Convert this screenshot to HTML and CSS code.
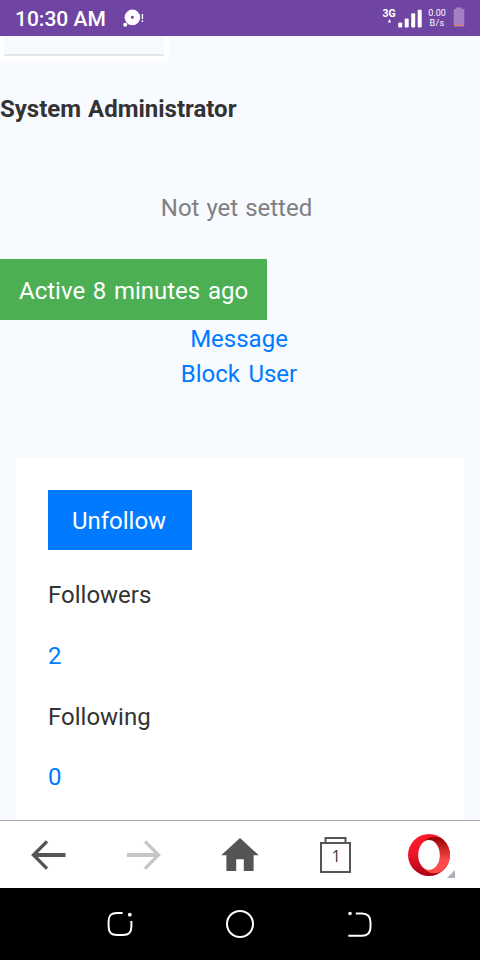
FILE: index.html
```html
<!DOCTYPE html>
<html lang="en">
<head>
<meta charset="utf-8">
<meta name="viewport" content="width=device-width">
<title>System Administrator</title>
<link rel="stylesheet" href="styles.css">
</head>
<body>
<header class="status">
  <time class="clock">10:30 AM</time>
  <svg class="notice" width="24" height="20" viewBox="0 0 24 20"><path fill="#fff" fill-rule="evenodd" d="M10.4 .6a7.8 7.8 0 1 0 0 15.6 7.8 7.8 0 0 0 0-15.6Zm0 6.2a1.5 1.5 0 1 1 0 3 1.5 1.5 0 0 1 0-3Z"/><circle cx="3.2" cy="15.8" r="2" fill="#fff"/><path d="M20.4 5v5M20.4 11.3V13" stroke="#fff" stroke-width="1.4"/></svg>
  <div class="network"><span>3G</span><svg width="5" height="4" viewBox="0 0 5 4"><path d="M.8 3.5 2.5 0l1.7 3.5Z" fill="#fff"/></svg></div>
  <svg class="signal" width="25" height="20" viewBox="0 0 25 20" fill="#fff"><rect x=".2" y="14.6" width="4" height="5" rx="1"/><rect x="6.7" y="10.5" width="4" height="9.1" rx="1"/><rect x="13.2" y="5.2" width="4" height="14.4" rx="1"/><rect x="19.7" y="1.8" width="4" height="17.8" rx="1"/></svg>
  <div class="speed"><span>0.00</span><span class="unit">B/s</span></div>
  <svg class="battery" width="12" height="20" viewBox="0 0 12 20"><path d="M3 2V.5h6V2h1.3q1 0 1 1v15.5q0 1-1 1H1.7q-1 0-1-1V3q0-1 1-1Z" fill="#a47fc1"/><path d="M1 18.5h10" stroke="#f5795c"/></svg>
</header>
<main class="page">
  <div class="photo"><div class="photo-frame"></div></div>
  <h1 class="name">System Administrator</h1>
  <p class="bio">Not yet setted</p>
  <div class="active">Active 8 minutes ago</div>
  <nav class="actions"><a class="message">Message</a><a class="block">Block User</a></nav>
  <section class="card">
    <button class="unfollow">Unfollow</button>
    <dl class="stats">
      <dt>Followers</dt><dd>2</dd>
      <dt>Following</dt><dd>0</dd>
    </dl>
  </section>
</main>
<nav class="toolbar">
  <div class="tool"><svg width="40" height="40" viewBox="0 0 40 40" fill="none" stroke="#555" stroke-width="3.4"><path d="M37.5 20H6" stroke-width="4"/><path d="M19 6.4 5.5 20 19 33.6"/></svg></div>
  <div class="tool"><svg width="40" height="40" viewBox="0 0 40 40" fill="none" stroke="#c6c6c6" stroke-width="3.4"><path d="M3 20h31.5" stroke-width="4"/><path d="M21 6.4 34.5 20 21 33.6"/></svg></div>
  <div class="tool"><svg width="40" height="40" viewBox="0 0 40 40"><path d="M20 3 38.8 20.2h-5.2V36h-9.8V24.3h-7.6V36H6.4V20.2H1.2Z" fill="#555"/></svg></div>
  <div class="tool"><svg width="40" height="40" viewBox="0 0 40 40" fill="none" stroke="#555" stroke-width="2"><path d="M5 8h29v29H5ZM9.5 8V3h20v5"/><text x="20.2" y="27" text-anchor="middle" class="tab-count">1</text></svg></div>
  <div class="tool opera">
    <svg width="42" height="42" viewBox="0 0 42 42">
      <defs>
        <linearGradient id="left" x1="0" y1="0" x2="0" y2="1"><stop stop-color="#ff1b2d"/><stop offset=".5" stop-color="#ed1529"/><stop offset="1" stop-color="#a90013"/></linearGradient>
        <linearGradient id="right" x1="0" y1="0" x2="0" y2="1"><stop stop-color="#940000"/><stop offset=".65" stop-color="#ff4b4b"/><stop offset="1" stop-color="#ff4b4b"/></linearGradient>
      </defs>
      <circle cx="21" cy="21" r="21" fill="url(#left)"/>
      <path d="M16 7.5C20 2.5 28 1 35 5.4a21 21 0 0 1 0 31.2C28 41 20 39.5 16 34.5Z" fill="url(#right)"/>
      <ellipse cx="21" cy="21" rx="10.8" ry="15" fill="#fff"/>
    </svg>
    <svg class="corner" width="8" height="8" viewBox="0 0 8 8"><path d="M8 0v8H0Z" fill="#aeb0ba"/></svg>
  </div>
</nav>
<footer class="system">
  <svg width="30" height="30" viewBox="0 0 30 30"><path d="M17.6 2.9H12c-6 0-8.4 2.4-8.4 8.4v4.9c0 6.4 2.4 8.9 8.4 8.9h6c6 0 8.4-2.5 8.4-8.9V11" fill="none" stroke="#fff" stroke-width="2"/><circle cx="24.8" cy="4.7" r="1.9" fill="#fff"/></svg>
  <svg width="30" height="30" viewBox="0 0 30 30"><circle cx="15" cy="14" r="13" fill="none" stroke="#fff" stroke-width="2"/></svg>
  <svg width="30" height="30" viewBox="0 0 30 30"><path d="M10.8 3.4H17c6 0 8.5 3 8.5 9v4.5c0 6-2.5 8.8-8.5 8.8H3.3" fill="none" stroke="#fff" stroke-width="2"/><circle cx="5" cy="3.5" r="1.8" fill="#fff"/></svg>
</footer>
</body>
</html>
```
FILE: styles.css
```css
* { box-sizing: border-box; }
body {
  margin: 0;
  width: 480px;
  height: 960px;
  display: flex;
  flex-direction: column;
  overflow: hidden;
  background: #f7faff;
  color: #333;
  font: 24px/35px Roboto, sans-serif;
}
.status {
  flex: none;
  display: flex;
  align-items: flex-start;
  height: 36px;
  padding-left: 15px;
  background: #7044a3;
  color: #fff;
}
.clock { width: 92px; font-size: 21px; font-weight: 500; line-height: 38px; white-space: nowrap; }
.notice { margin: 9px 0 0 15px; }
.network {
  display: flex;
  flex-direction: column;
  align-items: center;
  width: 14px;
  margin: 8px 0 0 236px;
  font-size: 10.5px;
  font-weight: 700;
  line-height: 11px;
}
.signal { margin: 8px 0 0 2px; }
.speed {
  display: flex;
  flex-direction: column;
  align-items: center;
  width: 18px;
  margin: 8px 0 0 5px;
  font-size: 9px;
  line-height: 10px;
}
.unit { letter-spacing: .4px; }
.battery { margin: 7px 0 0 7px; }
.page { flex: 1; min-height: 0; overflow: hidden; }
.photo { width: 169px; height: 25px; padding: 0 5px 5px 4px; background: #fff; }
.photo-frame { height: 20px; border-bottom: 2px solid #e5e5e5; background: #f7faff; }
.name { margin: 31px 0 0; font-size: 24px; font-weight: 700; line-height: 35px; word-spacing: 1px; }
.bio { margin: 64px 0 0; padding-right: 7px; text-align: center; color: #808080; word-spacing: 1px; }
.active {
  width: 267px;
  height: 61px;
  margin-top: 33px;
  padding-left: 19px;
  background: #4caf54;
  color: #fff;
  line-height: 64px;
  white-space: nowrap;
  word-spacing: 1.7px;
}
.actions {
  display: flex;
  flex-direction: column;
  align-items: center;
  padding: 2px 2px 0 0;
  color: #007bff;
  word-spacing: 2.5px;
}
.card { height: 400px; margin: 66px 16px 0; padding: 32px; background: #fff; }
.unfollow {
  display: block;
  width: 144px;
  height: 60px;
  padding: 2px 2px 0 0;
  border: 0;
  background: #007bff;
  color: #fff;
  font: 24px/35px Roboto, sans-serif;
}
.stats { margin: 28px 0 0; }
.stats dt { margin: 0 0 26px; }
.stats dd { margin: 0 0 26px; color: #007bff; }
.stats dt + dd:last-child { margin-top: -1px; }
.toolbar {
  flex: none;
  display: grid;
  grid-template-columns: 96px 96px 96px 96px 96px;
  height: 68px;
  border-top: 1px solid #aaa9ad;
  background: #fff;
}
.tool { display: flex; align-items: center; justify-content: center; padding-top: 1px; }
.tab-count { fill: #333; stroke: none; font: 15.5px "Open Sans", sans-serif; }
.opera { position: relative; padding-right: 6px; }
.corner { position: absolute; left: 63px; top: 49px; }
.system {
  flex: none;
  display: flex;
  justify-content: center;
  gap: 90px;
  height: 72px;
  padding-top: 22px;
  background: #000;
}
```
